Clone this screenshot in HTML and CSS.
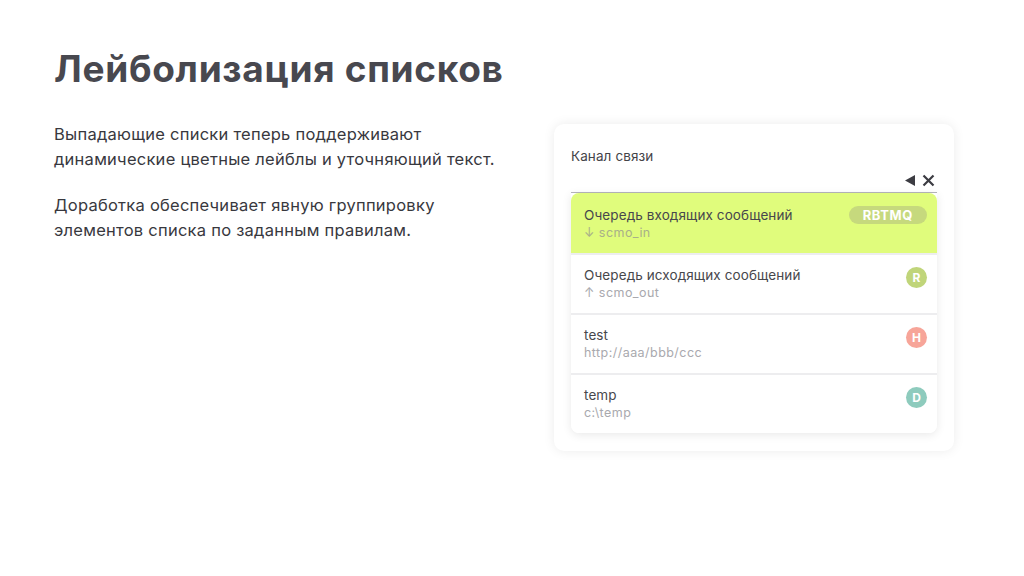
FILE: index.html
```html
<!DOCTYPE html>
<html lang="ru">
<head>
<meta charset="utf-8">
<link rel="stylesheet" href="styles.css">
</head>
<body>
<div class="slide">
  <h1 class="title">Лейболизация списков</h1>
  <div class="content">
    <div class="text">
      <p>Выпадающие списки теперь поддерживают<br>динамические цветные лейблы и уточняющий текст.</p>
      <p>Доработка обеспечивает явную группировку<br>элементов списка по заданным правилам.</p>
    </div>
    <div class="card">
      <div class="field-label">Канал связи</div>
      <div class="field-input">
        <svg class="ico" width="12" height="13" viewBox="0 0 12 13"><path d="M11 1 L11 12 L1 6.5 Z" fill="#3c3c42"/></svg>
        <svg class="ico" width="13" height="13" viewBox="0 0 13 13"><path d="M1.5 1.5 L11.5 11.5 M11.5 1.5 L1.5 11.5" stroke="#3c3c42" stroke-width="2.2" stroke-linecap="butt"/></svg>
      </div>
      <ul class="list">
        <li class="item active">
          <div class="item-text"><div class="item-title">Очередь входящих сообщений</div><div class="item-sub">↓ scmo_in</div></div>
          <span class="pill">RBTMQ</span>
        </li>
        <li class="item">
          <div class="item-text"><div class="item-title">Очередь исходящих сообщений</div><div class="item-sub">↑ scmo_out</div></div>
          <span class="dot dot-r">R</span>
        </li>
        <li class="item">
          <div class="item-text"><div class="item-title">test</div><div class="item-sub">http://aaa/bbb/ccc</div></div>
          <span class="dot dot-h">H</span>
        </li>
        <li class="item">
          <div class="item-text"><div class="item-title">temp</div><div class="item-sub">c:\temp</div></div>
          <span class="dot dot-d">D</span>
        </li>
      </ul>
    </div>
  </div>
</div>
</body>
</html>
```
FILE: styles.css
```css
* { box-sizing: border-box; }
html, body { margin: 0; padding: 0; background: #fff; }
body { font-family: Inter, "Noto Sans", sans-serif; }
.slide { width: 1024px; height: 576px; padding: 44px 0 0 54px; }
.title {
  margin: 0;
  font-size: 37px;
  line-height: 50px;
  font-weight: 700;
  color: #48484f;
  letter-spacing: 0.7px;
}
.content { display: flex; margin-top: 30px; }
.text { width: 500px; margin-top: -2px; }
.text p {
  margin: 0 0 22px 0;
  font-size: 16.5px;
  line-height: 24.5px;
  color: #38383e;
  letter-spacing: 0.25px;
}
.card {
  width: 400px;
  height: 327px;
  background: #fff;
  border-radius: 10px;
  box-shadow: 0 0 12px rgba(0,0,0,0.08);
  padding: 23px 17px 18px 17px;
}
.field-label { font-size: 13.5px; line-height: 18px; color: #444449; letter-spacing: 0.1px; }
.field-input {
  height: 28px;
  border-bottom: 1px solid #b5b5ba;
  display: flex;
  justify-content: flex-end;
  align-items: center;
  gap: 6px;
  padding: 3px 2px 0 0;
}
.list {
  list-style: none;
  margin: 0;
  padding: 0;
  border-radius: 0 0 8px 8px;
  box-shadow: 0 2px 10px rgba(0,0,0,0.09);
  overflow: hidden;
}
.item {
  height: 60px;
  display: flex;
  align-items: flex-start;
  justify-content: space-between;
  padding: 11px 10px 0 13px;
  border-top: 2px solid #ededef;
  background: #fff;
}
.item:first-child { border-top: 0; padding-top: 13px; }
.item.active { background: #e0fc7c; border-radius: 8px 8px 0 0; }
.item-title { font-size: 13.5px; line-height: 18px; color: #47474c; letter-spacing: 0.1px; }
.item-sub { font-size: 12.5px; line-height: 16px; color: #a9a9ae; margin-top: 1px; letter-spacing: 0.45px; }
.active .item-sub { color: #a9b08a; }
.pill {
  background: #c6d97d;
  color: #fff;
  font-size: 13px;
  font-weight: 700;
  line-height: 18px;
  padding: 0 14px;
  border-radius: 9px;
  letter-spacing: 0.6px;
}
.dot {
  width: 21px; height: 21px; border-radius: 50%;
  color: #fff; font-size: 12px; font-weight: 700;
  display: flex; align-items: center; justify-content: center;
  margin-top: 1px;
}
.dot-r { background: #c0d57a; }
.dot-h { background: #f7a599; }
.dot-d { background: #8ecbbd; }
```
